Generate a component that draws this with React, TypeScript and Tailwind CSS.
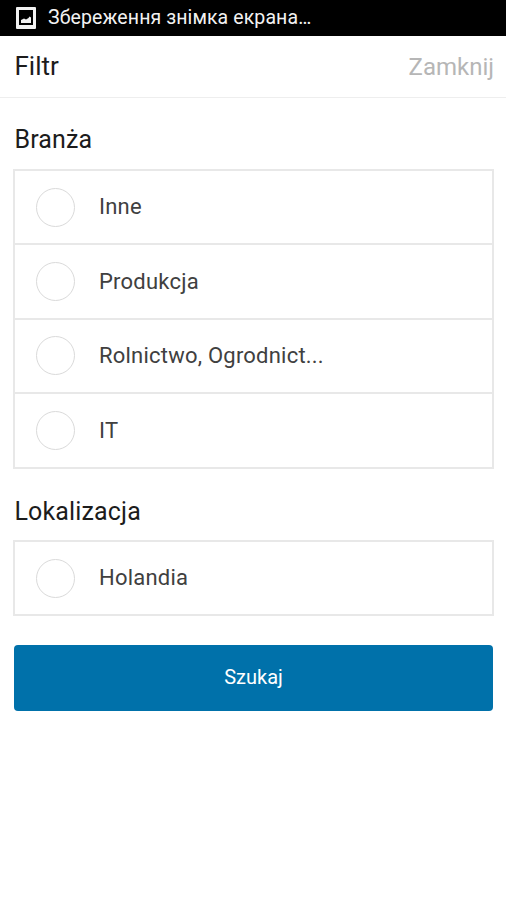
import React from "react";

function Option({ label, last }: { label: string; last?: boolean }) {
  return (
    <label className={`flex items-center pl-[21px] ${last ? "h-[73px]" : "h-[74.4px] border-b-2 border-[#e8e8e8]"}`}>
      <span className="size-[39px] shrink-0 rounded-full border-[1.5px] border-[#dadada]" />
      <span className="ml-6 text-[22px] leading-7 tracking-[0.22px] text-[#404040]">{label}</span>
    </label>
  );
}

export default function App() {
  return (
    <div className="flex h-[900px] w-[506px] flex-col overflow-hidden bg-white font-['Roboto',sans-serif] text-[#1c1c1c]">
      <div className="flex h-9 shrink-0 items-center bg-black pb-px pl-4 text-[19.5px] tracking-[0.1px] text-[#f2f2f2]">
        <svg width="20" height="22" viewBox="0 0 20 22" className="mr-3">
          <path
            fill="#f2f2f2"
            fillRule="evenodd"
            d="M1 0h18q1 0 1 1v20q0 1-1 1H1q-1 0-1-1V1q0-1 1-1zm2 3v15h14V3zm2 13v-3l3-1.500 2 1 2.500-1.500 1-1.500 1.500 1v5.500z"
          />
        </svg>
        <span>Збереження знімка екрана…</span>
      </div>
      <header className="flex h-[62px] shrink-0 items-center justify-between border-b border-[#eeeeee] pr-3 pl-[14.5px]">
        <h1 className="text-[26px]">Filtr</h1>
        <button className="pt-px text-[24px] text-[#b6b6b6]">Zamknij</button>
      </header>
      <main className="flex flex-col pr-3 pl-[13px]">
        <h2 className="mt-[24px] h-9 pl-[1.5px] text-[25px] leading-9 tracking-[0.15px]">Branża</h2>
        <div className="mt-[11px] border-2 border-[#e8e8e8]">
          <Option label="Inne" />
          <Option label="Produkcja" />
          <Option label="Rolnictwo, Ogrodnict..." />
          <Option label="IT" last />
        </div>
        <h2 className="mt-[24.8px] h-9 pl-[1.5px] text-[25px] leading-9 tracking-[0.15px]">Lokalizacja</h2>
        <div className="mt-[10px] h-[76px] border-2 border-[#e8e8e8]">
          <Option label="Holandia" last />
        </div>
        <button className="mt-[29px] mr-px ml-px h-[66px] rounded bg-[#0071aa] pb-px text-[20px] text-white">Szukaj</button>
      </main>
    </div>
  );
}
